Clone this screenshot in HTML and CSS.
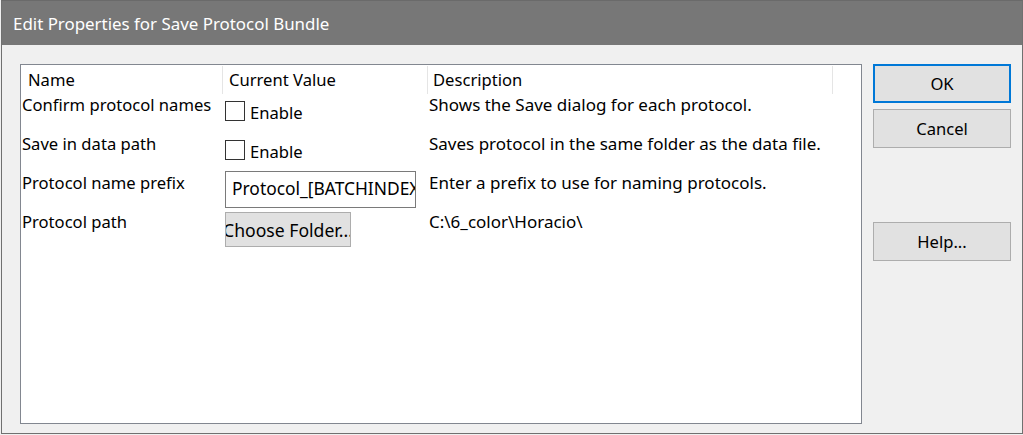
FILE: index.html
```html
<!DOCTYPE html>
<html>
<head>
<meta charset="utf-8">
<link rel="stylesheet" href="styles.css">
</head>
<body>
<div class="window">
  <div class="titlebar">Edit Properties for Save Protocol Bundle</div>
  <div class="client">
    <div class="grid">
      <div class="header">
        <div class="hcell hname">Name</div>
        <div class="hcell hvalue">Current Value</div>
        <div class="hcell hdesc">Description</div>
        <div class="hcell hrest"></div>
      </div>
      <div class="row">
        <div class="cname">Confirm protocol names</div>
        <div class="cvalue"><label class="check"><span class="box"></span><span class="clabel">Enable</span></label></div>
        <div class="cdesc">Shows the Save dialog for each protocol.</div>
      </div>
      <div class="row">
        <div class="cname">Save in data path</div>
        <div class="cvalue"><label class="check"><span class="box"></span><span class="clabel">Enable</span></label></div>
        <div class="cdesc">Saves protocol in the same folder as the data file.</div>
      </div>
      <div class="row">
        <div class="cname">Protocol name prefix</div>
        <div class="cvalue"><div class="textbox">Protocol_[BATCHINDEX]</div></div>
        <div class="cdesc">Enter a prefix to use for naming protocols.</div>
      </div>
      <div class="row">
        <div class="cname">Protocol path</div>
        <div class="cvalue"><div class="choose"><span>Choose Folder...</span></div></div>
        <div class="cdesc">C:\6_color\Horacio\</div>
      </div>
    </div>
    <div class="buttons">
      <div class="btn default">OK</div>
      <div class="btn">Cancel</div>
      <div class="spacer"></div>
      <div class="btn">Help...</div>
    </div>
  </div>
</div>
</body>
</html>
```
FILE: styles.css
```css
html, body {
  margin: 0;
  padding: 0;
  background: #f0f0f0;
}
body {
  font-family: "Noto Sans", "Segoe UI", sans-serif;
  font-size: 16.6px;
  color: #000;
  width: 1023px;
  height: 435px;
  overflow: hidden;
}
.window {
  margin-left: 1px;
  width: 1022px;
  height: 434px;
  box-sizing: border-box;
  border: 1px solid #707070;
  border-top-color: #6a6a6a;
  display: flex;
  flex-direction: column;
  background: #f0f0f0;
}
.titlebar {
  height: 44px;
  background: #777777;
  color: #ffffff;
  font-size: 16.9px;
  padding-left: 11px;
  display: flex;
  align-items: center;
  flex: none;
}
.client {
  flex: 1;
  display: flex;
  padding: 19px 10px 9px 18px;
  gap: 11px;
}
.grid {
  width: 842px;
  height: 360px;
  box-sizing: border-box;
  border: 1px solid #828790;
  background: #fff;
  flex: none;
}
.header {
  display: flex;
  height: 29px;
  padding-top: 1px;
  box-sizing: border-box;
}
.hcell {
  box-sizing: border-box;
  line-height: 28px;
  height: 28px;
  border-right: 1px solid #e5e5e5;
  white-space: nowrap;
}
.hname { width: 202px; padding-left: 7px; }
.hvalue { width: 205px; padding-left: 6px; }
.hdesc { width: 405px; padding-left: 5px; }
.hrest { flex: 1; border-right: none; }
.row {
  display: flex;
  height: 39px;
}
.cname {
  width: 202px;
  padding-left: 1px;
  box-sizing: border-box;
  line-height: 22px;
  white-space: nowrap;
}
.cvalue {
  width: 205px;
  box-sizing: border-box;
  padding-left: 2px;
  display: flex;
}
.cdesc {
  flex: 1;
  padding-left: 1px;
  line-height: 22px;
  white-space: nowrap;
  font-size: 17px;
}
.check {
  display: flex;
  align-items: flex-start;
  gap: 5px;
  padding-top: 7px;
}
.box {
  width: 18px;
  height: 18px;
  border: 1px solid #333;
  background: #fff;
  flex: none;
}
.clabel {
  line-height: 22px;
  margin-top: 1px;
}
.textbox {
  margin-top: -1px;
  width: 191px;
  height: 37px;
  box-sizing: border-box;
  border: 1px solid #7a7a7a;
  padding-left: 6px;
  line-height: 33px;
  font-size: 17.4px;
  white-space: nowrap;
  overflow: hidden;
}
.choose {
  margin-top: 1px;
  width: 126px;
  height: 35px;
  box-sizing: border-box;
  border: 1px solid #adadad;
  background: #e1e1e1;
  display: flex;
  justify-content: center;
  align-items: center;
  overflow: hidden;
  white-space: nowrap;
  font-size: 17.6px;
}
.choose span { flex: none; }
.buttons {
  display: flex;
  flex-direction: column;
  width: 138px;
  gap: 6px;
}
.btn {
  height: 39px;
  box-sizing: border-box;
  border: 1px solid #adadad;
  background: #e1e1e1;
  display: flex;
  align-items: center;
  justify-content: center;
}
.btn.default {
  border: 2px solid #0078d7;
}
.spacer {
  height: 62px;
}
```
